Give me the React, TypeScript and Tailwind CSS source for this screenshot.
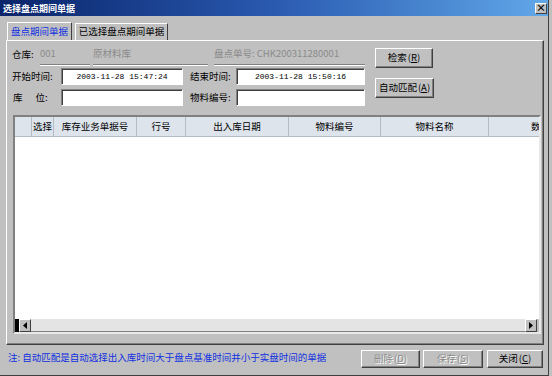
import React from 'react'

interface Column {
  label: string
  w: string
}

const columns: Column[] = [
  { label: '', w: 'w-[17px]' },
  { label: '选择', w: 'w-[22px]' },
  { label: '库存业务单据号', w: 'w-[83px]' },
  { label: '行号', w: 'w-[49px]' },
  { label: '出入库日期', w: 'w-[103px]' },
  { label: '物料编号', w: 'w-[92px]' },
  { label: '物料名称', w: 'w-[108px]' },
  { label: '数量', w: 'w-[104px]' },
]

const Field: React.FC<{ w: string; value?: string }> = ({ w, value }) => (
  <div
    className={`${w} h-[17px] bg-white border border-t-[#808080] border-l-[#808080] border-r-white border-b-white shadow-[inset_1px_1px_0_#404040] flex items-center justify-center font-['Liberation_Mono',monospace] text-[8px] text-black`}
  >
    {value}
  </div>
)

const Button: React.FC<{ text: string; hot: string; w: string; h?: string; disabled?: boolean }> = ({
  text,
  hot,
  w,
  h = 'h-[20px]',
  disabled,
}) => (
  <div
    className={`${w} ${h} flex items-center justify-center border border-t-white border-l-white border-r-[#404040] border-b-[#404040] shadow-[inset_-1px_-1px_0_#808080] ${
      disabled ? 'text-[#8a8a8a] [text-shadow:1px_1px_0_#ffffff]' : 'text-black'
    }`}
  >
    <span>{text}</span>
    <span className="ml-[1px]">
      (<span className="underline">{hot}</span>)
    </span>
  </div>
)

const Etched: React.FC<{ w: string; ml?: string; children: React.ReactNode }> = ({ w, ml = '', children }) => (
  <div className={`${w} ${ml} h-full flex items-center border-b border-[#808080] shadow-[0_1px_0_#ffffff] text-[#8a8a8a]`}>
    {children}
  </div>
)

const App: React.FC = () => {
  return (
    <div className="w-[552px] h-[376px] bg-[#c0c0c0] overflow-hidden font-['Noto_Sans_CJK_SC','Noto_Sans',sans-serif] text-[9.5px] leading-none">
      <div className="w-[549px] h-[376px] flex flex-col border-r border-b border-[#404040]">
        {/* 标题栏 */}
        <div className="h-[16px] flex items-center justify-between bg-gradient-to-r from-[#0a246a] via-[#2a5ab0] to-[#62a8e8] pl-[3px] pr-[1px]">
          <span className="text-white font-bold text-[9px]">选择盘点期间单据</span>
          <div className="w-[12px] h-[11px] bg-[#c0c0c0] border border-t-white border-l-white border-r-[#404040] border-b-[#404040] flex items-center justify-center text-[10px] font-bold text-black">
            ×
          </div>
        </div>

        {/* 页签 */}
        <div className="flex pl-[7px] pt-[6px] gap-[3px]">
          <div className="w-[65px] h-[18px] relative z-10 -mb-[1px] flex items-center justify-center bg-[#c0c0c0] border-t border-l border-white border-r border-r-[#404040] text-[#1030e0]">
            盘点期间单据
          </div>
          <div className="w-[93px] h-[17px] mt-[1px] flex items-center justify-center border-t border-l border-white border-r border-r-[#404040] text-black">
            已选择盘点期间单据
          </div>
        </div>

        {/* 面板 */}
        <div className="ml-[6px] w-[538px] h-[305px] flex flex-col border border-t-white border-l-white border-r-[#404040] border-b-[#404040] shadow-[inset_-1px_-1px_0_#808080] pl-[5px] pt-[3px]">
          <div className="flex">
            <div className="w-[353px] flex flex-col">
              <div className="h-[21px] flex items-center">
                <span className="w-[28px] text-black">仓库:</span>
                <Etched w="w-[50px]">001</Etched>
                <Etched w="w-[115px]" ml="ml-[3px]">原材料库</Etched>
                <Etched w="w-[151px]" ml="ml-[6px]">
                  盘点单号: CHK200311280001
                </Etched>
              </div>
              <div className="h-[17px] mt-[3px] flex items-center">
                <span className="w-[49px] text-black">开始时间:</span>
                <Field w="w-[122px]" value="2003-11-28 15:47:24" />
                <span className="w-[46px] ml-[7px] text-black">结束时间:</span>
                <Field w="w-[129px]" value="2003-11-28 15:50:16" />
              </div>
              <div className="h-[17px] mt-[4px] flex items-center">
                <span className="w-[49px] text-black pl-[1px]">
                  库<span className="ml-[13px]">位:</span>
                </span>
                <Field w="w-[122px]" />
                <span className="w-[46px] ml-[7px] text-black">物料编号:</span>
                <Field w="w-[129px]" />
              </div>
            </div>
            <div className="pl-[10px] pt-[4px] flex flex-col">
              <Button text="检索" hot="R" w="w-[58px]" />
              <div className="mt-[10px]">
                <Button text="自动匹配" hot="A" w="w-[59px]" />
              </div>
            </div>
          </div>

          {/* 表格 */}
          <div className="ml-[1px] mt-[9px] w-[528px] h-[219px] border-2 border-t-[#808080] border-l-[#808080] border-r-[#e8e8e8] border-b-[#e8e8e8] flex flex-col overflow-hidden">
            <div className="h-[20px] flex shrink-0 bg-[#dde4ec] border-b border-[#b4bcc6]">
              {columns.map((c, i) => (
                <div
                  key={i}
                  className={`${c.w} shrink-0 h-full flex items-center justify-center border-r border-[#b4bcc6] text-black`}
                >
                  {c.label}
                </div>
              ))}
            </div>
            <div className="flex-1 bg-white" />
            <div className="h-[13px] flex shrink-0 bg-[#e4e4e4]">
              <div className="w-[4px] bg-black" />
              <div className="w-[12px] h-full bg-[#c0c0c0] border border-t-white border-l-white border-r-[#404040] border-b-[#404040] flex items-center justify-center">
                <svg width="4" height="7" viewBox="0 0 4 7">
                  <path d="M4 0 L0 3.5 L4 7 Z" fill="#000" />
                </svg>
              </div>
              <div className="flex-1 border-b border-[#808080]" />
              <div className="w-[12px] h-full bg-[#c0c0c0] border border-t-white border-l-white border-r-[#404040] border-b-[#404040] flex items-center justify-center">
                <svg width="4" height="7" viewBox="0 0 4 7">
                  <path d="M0 0 L4 3.5 L0 7 Z" fill="#000" />
                </svg>
              </div>
              <div className="w-[2px] bg-[#c0c0c0]" />
            </div>
          </div>
        </div>

        {/* 底部 */}
        <div className="flex items-center pl-[8px] pt-[5px]">
          <span className="text-[#1030e0] mb-[3px]">
            注: 自动匹配是自动选择出入库时间大于盘点基准时间并小于实盘时间的单据
          </span>
          <div className="ml-auto flex gap-[3px] pr-[5px]">
            <Button text="删除" hot="D" w="w-[59px]" h="h-[18px]" disabled />
            <Button text="保存" hot="S" w="w-[60px]" h="h-[18px]" disabled />
            <div className="ml-[1px]">
              <Button text="关闭" hot="C" w="w-[56px]" h="h-[18px]" />
            </div>
          </div>
        </div>
      </div>
    </div>
  )
}

export default App
